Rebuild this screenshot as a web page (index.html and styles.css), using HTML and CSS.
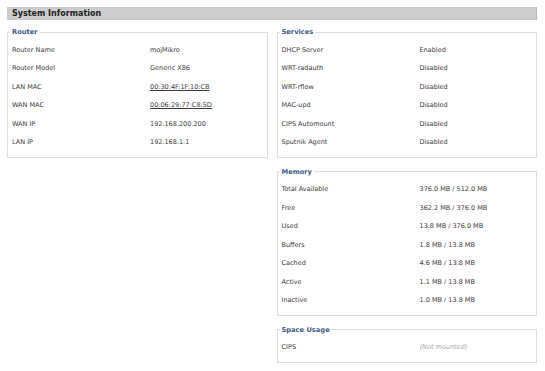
FILE: index.html
```html
<!DOCTYPE html>
<html lang="en">
<head>
    <meta charset="UTF-8">
    <meta name="viewport" content="width=device-width, initial-scale=1.0">
    <title>System Information</title>
    <link rel="stylesheet" href="styles.css">
</head>
<body>
    <div class="page">
        <h2 class="page-title">System Information</h2>
        <div class="columns">
            <div class="col">
                <fieldset class="box">
                    <legend>Router</legend>
                    <div class="row"><span class="label">Router Name</span><span class="value">mojMikro</span></div>
                    <div class="row"><span class="label">Router Model</span><span class="value">Generic X86</span></div>
                    <div class="row"><span class="label">LAN MAC</span><span class="value mac">00:30:4F:1F:10:CB</span></div>
                    <div class="row"><span class="label">WAN MAC</span><span class="value mac">00:06:29:77:C8:5D</span></div>
                    <div class="row"><span class="label">WAN IP</span><span class="value">192.168.200.200</span></div>
                    <div class="row"><span class="label">LAN IP</span><span class="value">192.168.1.1</span></div>
                </fieldset>
            </div>
            <div class="col">
                <fieldset class="box">
                    <legend>Services</legend>
                    <div class="row"><span class="label">DHCP Server</span><span class="value">Enabled</span></div>
                    <div class="row"><span class="label">WRT-radauth</span><span class="value">Disabled</span></div>
                    <div class="row"><span class="label">WRT-rflow</span><span class="value">Disabled</span></div>
                    <div class="row"><span class="label">MAC-upd</span><span class="value">Disabled</span></div>
                    <div class="row"><span class="label">CIPS Automount</span><span class="value">Disabled</span></div>
                    <div class="row"><span class="label">Sputnik Agent</span><span class="value">Disabled</span></div>
                </fieldset>
                <fieldset class="box">
                    <legend>Memory</legend>
                    <div class="row"><span class="label">Total Available</span><span class="value">376.0 MB / 512.0 MB</span></div>
                    <div class="row"><span class="label">Free</span><span class="value">362.2 MB / 376.0 MB</span></div>
                    <div class="row"><span class="label">Used</span><span class="value">13.8 MB / 376.0 MB</span></div>
                    <div class="row"><span class="label">Buffers</span><span class="value">1.8 MB / 13.8 MB</span></div>
                    <div class="row"><span class="label">Cached</span><span class="value">4.6 MB / 13.8 MB</span></div>
                    <div class="row"><span class="label">Active</span><span class="value">1.1 MB / 13.8 MB</span></div>
                    <div class="row"><span class="label">Inactive</span><span class="value">1.0 MB / 13.8 MB</span></div>
                </fieldset>
                <fieldset class="box">
                    <legend>Space Usage</legend>
                    <div class="row"><span class="label">CIPS</span><span class="value muted">(Not mounted)</span></div>
                </fieldset>
            </div>
        </div>
    </div>
</body>
</html>
```

FILE: styles.css
```css
body{
    margin: 0;
    padding: 0;
    background-color: #fff;
    font-family: "DejaVu Sans", Verdana, sans-serif;
    color: #3a3a3a;
}
.page{
    width: 530px;
    padding: 7px 0 0 7px;
}
.page-title{
    margin: 0;
    height: 13px;
    line-height: 13px;
    padding-left: 5px;
    background-color: #cdcdcd;
    border-right: 1px solid #b8b8b8;
    font-size: 8px;
    font-weight: bold;
    color: #222;
}
.columns{
    display: flex;
    gap: 9px;
    margin-top: 7px;
}
.col{
    flex: 1;
    display: flex;
    flex-direction: column;
    gap: 9px;
}
.box{
    margin: 0;
    padding: 3.5px 4px 5px 4px;
    border: 1px solid #dedede;
    min-width: 0;
}
.box legend{
    padding: 0 2px;
    margin-left: -2px;
    height: 10px;
    line-height: 10px;
    font-size: 6.7px;
    font-weight: bold;
    color: #3d5a82;
}
.row{
    display: grid;
    grid-template-columns: 138px 1fr;
    height: 18.5px;
    line-height: 18.5px;
    font-size: 6.5px;
}
.mac{
    text-decoration: underline;
}
.muted{
    font-style: italic;
    color: #a8a8a8;
}
```
